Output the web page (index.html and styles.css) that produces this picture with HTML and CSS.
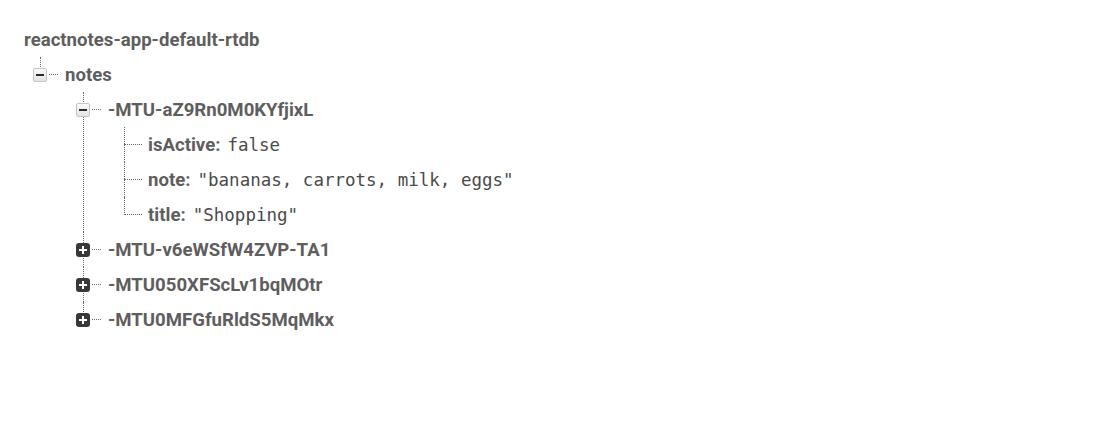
FILE: index.html
```html
<!DOCTYPE html>
<html lang="en">
<head>
<meta charset="utf-8">
<title>reactnotes-app-default-rtdb</title>
<link rel="stylesheet" href="styles.css">
</head>
<body>
<div class="tree">
  <div class="root-row"><span class="key">reactnotes-app-default-rtdb</span></div>
  <ul class="children level-1">
    <li class="node">
      <div class="row">
        <span class="toggle toggle-open"><span class="bar"></span></span>
        <span class="dash"></span>
        <span class="key">notes</span>
      </div>
      <ul class="children level-2">
        <li class="node">
          <div class="row">
            <span class="toggle toggle-open"><span class="bar"></span></span>
            <span class="dash"></span>
            <span class="key">-MTU-aZ9Rn0M0KYfjixL</span>
          </div>
          <ul class="children level-3">
            <li class="node leaf">
              <div class="row">
                <span class="leaf-dash"></span>
                <span class="key">isActive:</span><span class="value">false</span>
              </div>
            </li>
            <li class="node leaf">
              <div class="row">
                <span class="leaf-dash"></span>
                <span class="key">note:</span><span class="value">"bananas, carrots, milk, eggs"</span>
              </div>
            </li>
            <li class="node leaf">
              <div class="row">
                <span class="leaf-dash"></span>
                <span class="key">title:</span><span class="value">"Shopping"</span>
              </div>
            </li>
          </ul>
        </li>
        <li class="node">
          <div class="row">
            <span class="toggle toggle-closed"><span class="bar"></span><span class="bar bar-v"></span></span>
            <span class="dash"></span>
            <span class="key">-MTU-v6eWSfW4ZVP-TA1</span>
          </div>
        </li>
        <li class="node">
          <div class="row">
            <span class="toggle toggle-closed"><span class="bar"></span><span class="bar bar-v"></span></span>
            <span class="dash"></span>
            <span class="key">-MTU050XFScLv1bqMOtr</span>
          </div>
        </li>
        <li class="node">
          <div class="row">
            <span class="toggle toggle-closed"><span class="bar"></span><span class="bar bar-v"></span></span>
            <span class="dash"></span>
            <span class="key">-MTU0MFGfuRldS5MqMkx</span>
          </div>
        </li>
      </ul>
    </li>
  </ul>
</div>
</body>
</html>
```

FILE: styles.css
```css
* { box-sizing: border-box; }

html, body {
  margin: 0;
  padding: 0;
  background: #ffffff;
}

body {
  font-family: Roboto, "Noto Sans", Arial, sans-serif;
  color: #616161;
  width: 1106px;
  height: 440px;
  overflow: hidden;
}

.tree {
  padding: 22px 0 0 24px;
}

.root-row {
  height: 35px;
  display: flex;
  align-items: center;
}

.key {
  font-weight: 700;
  font-size: 18.6px;
  color: #5e5e5e;
  white-space: nowrap;
}

.value {
  font-family: "DejaVu Sans Mono", "Liberation Mono", monospace;
  font-size: 17.5px;
  color: #4a4a4a;
  margin-left: 7px;
  white-space: pre;
}

.children {
  list-style: none;
  margin: 0;
  padding: 0;
}

.level-1 { margin-left: 16px; }
.level-2 { margin-left: 43px; }
.level-3 { margin-left: 41px; }

.node {
  position: relative;
}

.node::before {
  content: "";
  position: absolute;
  left: 0;
  top: 0;
  bottom: 0;
  border-left: 1px dotted #666666;
}

.node:last-child::before {
  bottom: auto;
  height: 18px;
}

.row {
  position: relative;
  height: 35px;
  display: flex;
  align-items: center;
}

.toggle {
  position: relative;
  z-index: 1;
  width: 14px;
  height: 14px;
  margin-left: -7px;
  border-radius: 2px;
  display: flex;
  align-items: center;
  justify-content: center;
  flex: none;
}

.toggle-open {
  background: linear-gradient(#fafafa, #e4e4e4);
  border: 1px solid #c4c4c4;
}

.toggle-open .bar {
  width: 8px;
  height: 2px;
  background: #2b2b2b;
}

.toggle-closed {
  background: #383838;
  border-radius: 3px;
}

.toggle-closed .bar {
  position: absolute;
  width: 8px;
  height: 2px;
  background: #ffffff;
}

.toggle-closed .bar-v {
  width: 2px;
  height: 8px;
}

.dash {
  width: 9px;
  margin-left: 2px;
  margin-right: 7px;
  border-top: 1px dotted #666666;
  flex: none;
}

.leaf-dash {
  width: 18px;
  margin-right: 6px;
  border-top: 1px dotted #666666;
  flex: none;
}
```
